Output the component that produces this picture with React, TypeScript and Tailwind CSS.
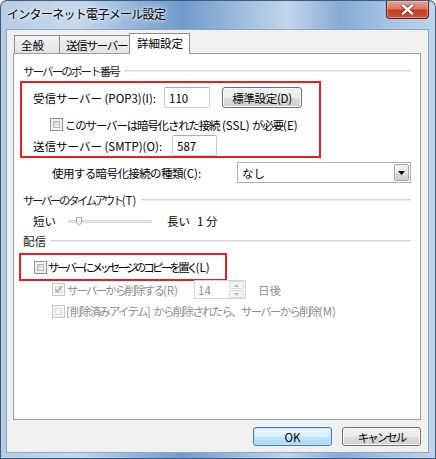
import React from "react";

const F = "font-['Noto_Sans_CJK_JP','Noto_Sans',sans-serif]";

function Check({ checked = false, disabled = false }: { checked?: boolean; disabled?: boolean }) {
  return (
    <span
      className={
        disabled
          ? "relative inline-block w-[13px] h-[13px] shrink-0 border border-[#c6c6c6] bg-[#f7f7f7]"
          : "relative inline-block w-[13px] h-[13px] shrink-0 border border-[#8e8f8f] bg-[#f4f4f4]"
      }
    >
      <span
        className={
          disabled
            ? "absolute left-[2px] top-[2px] w-[7px] h-[7px] border border-[#d8d8d8] bg-[#f2f2f2]"
            : "absolute left-[2px] top-[2px] w-[7px] h-[7px] border border-[#b3b7bd] bg-gradient-to-br from-[#cfd2d6] to-[#f7f7f7]"
        }
      />
      {checked && (
        <svg className="absolute left-[1px] top-[1px]" width="9" height="9" viewBox="0 0 9 9">
          <path d="M1.5 4.5 L3.5 6.8 L7.5 1.5" fill="none" stroke="#a6a6a6" strokeWidth="1.6" />
        </svg>
      )}
    </span>
  );
}

const T = "text-[11.5px] leading-[16px] whitespace-nowrap";

function Line() {
  return (
    <div className="flex-1 ml-[5px] flex flex-col">
      <div className="h-px bg-[#d5d5d5]" />
      <div className="h-px bg-[#ededed]" />
    </div>
  );
}

function TextBox({ value, w }: { value: string; w: string }) {
  return (
    <div
      className={`${w} h-[21px] border border-[#c9ccd2] border-t-[#abadb3] rounded-[2px] bg-white flex items-center pl-[4px] ${T} text-black`}
    >
      {value}
    </div>
  );
}

export default function App() {
  return (
    <div
      className={`${F} relative w-[436px] h-[459px] overflow-hidden rounded-t-[7px] shadow-[inset_0_0_0_1px_#3d5b7c] bg-[linear-gradient(90deg,#b7cde5_0%,#c6d8ec_18%,#8fb2d8_32%,#6f9bcb_42%,#a8c3e1_58%,#c3d6eb_66%,#86abd5_78%,#a9c5e3_90%,#c1d5ea_100%)]`}
    >
      {/* title bar */}
      <div className="flex items-start h-[30px]">
        <span className="ml-[7px] mt-[6px] text-[12px] leading-[16px] tracking-[-0.7px] text-black whitespace-nowrap [text-shadow:0_0_6px_#ffffff,0_0_3px_#ffffff]">
          インターネット電子メール設定
        </span>
        <div className="ml-auto mr-[7px] mt-[1px] w-[43px] h-[18px] rounded-b-[4px] border border-[#5e1f15] border-t-0 bg-[linear-gradient(180deg,#e7a595_0%,#d4755f_45%,#c13d23_55%,#cc5438_100%)] shadow-[inset_0_0_0_1px_rgba(255,220,210,0.45)] flex items-center justify-center">
          <svg width="13" height="11" viewBox="0 0 13 11">
            <path d="M2 1.5 L11 9.5 M11 1.5 L2 9.5" stroke="#4a1a10" strokeWidth="4" strokeLinecap="square" opacity="0.55" />
            <path d="M2 1.5 L11 9.5 M11 1.5 L2 9.5" stroke="#ffffff" strokeWidth="2.4" strokeLinecap="square" />
          </svg>
        </div>
      </div>

      {/* client area */}
      <div className="ml-[7px] w-[421px] h-[422px] bg-[#f0f0f0] shadow-[0_0_0_1px_#8aa6c4]">
        {/* tabs */}
        <div className="flex items-end h-[23px] pl-[7px]">
          <div className={`w-[46px] h-[18px] border border-b-0 border-[#898c95] bg-[linear-gradient(180deg,#f3f3f3,#e3e3e3)] pl-[6px] ${T} leading-[18px] text-black`}>
            全般
          </div>
          <div className={`-ml-px w-[71px] h-[18px] border border-b-0 border-[#898c95] bg-[linear-gradient(180deg,#f3f3f3,#e3e3e3)] pl-[6px] ${T} tracking-[-1.3px] leading-[18px] text-black`}>
            送信サーバー
          </div>
          <div className={`relative z-10 -ml-px -mb-px w-[61px] h-[21px] border border-b-0 border-[#898c95] bg-white pl-[7px] ${T} leading-[19px] text-black`}>
            詳細設定
          </div>
        </div>

        {/* panel */}
        <div className="ml-[6px] w-[408px] h-[367px] border border-[#9a9da3] bg-white px-[9px]">
          <div className="mt-[9px] flex items-center h-[16px]">
            <span className={`${T} tracking-[-1.9px] text-[#1a1a1a]`}>サーバーのポート番号</span>
            <Line />
          </div>

          {/* red box 1 */}
          <div className="mt-[2px] -ml-[3px] w-[301px] h-[77px] border-2 border-[#ea1c24]">
            <div className="mt-[4px] pl-[11px] flex items-center h-[21px]">
              <span className={`w-[131px] ${T} text-black`}>受信サーバー (POP3)(I):</span>
              <TextBox value="110" w="w-[46px]" />
              <div className={`ml-[12px] w-[80px] h-[21px] rounded-[3px] border border-[#707070] bg-[linear-gradient(180deg,#f2f2f2_0%,#ebebeb_50%,#dddddd_51%,#cfcfcf_100%)] shadow-[inset_0_0_0_1px_#fcfcfc] flex items-center justify-center ${T} tracking-[-0.3px] text-black`}>
                標準設定(D)
              </div>
            </div>
            <div className="mt-[10px] pl-[28px] flex items-center h-[13px]">
              <Check />
              <span className={`ml-[2px] ${T} text-black`}>
                <span className="tracking-[-1.2px]">このサーバーは暗号化された接続</span> (SSL) <span className="tracking-[-1.2px]">が必要</span>(E)
              </span>
            </div>
            <div className="mt-[4px] pl-[11px] flex items-center h-[21px]">
              <span className={`w-[139px] ${T} text-black`}>送信サーバー (SMTP)(O):</span>
              <TextBox value="587" w="w-[45px]" />
            </div>
          </div>

          {/* encryption select */}
          <div className="mt-[4px] flex items-center h-[21px]">
            <span className={`w-[214px] pl-[29px] ${T} text-black`}>
              <span className="tracking-[-0.6px]">使用する暗号化接続の種類</span>(C):
            </span>
            <div className="flex-1 h-[21px] border border-[#adb2b5] bg-white flex items-center pl-[4px] pr-[1px]">
              <span className={`flex-1 ${T} text-black`}>なし</span>
              <div className="w-[15px] h-[17px] border border-[#a7a7a7] rounded-[2px] bg-[linear-gradient(180deg,#f2f2f2_0%,#ebebeb_50%,#dddddd_51%,#cfcfcf_100%)] flex items-center justify-center">
                <svg width="7" height="4" viewBox="0 0 7 4">
                  <path d="M0 0 H7 L3.5 4 Z" fill="#000" />
                </svg>
              </div>
            </div>
          </div>

          <div className="mt-[9px] flex items-center h-[16px]">
            <span className={`${T} text-[#1a1a1a]`}>
              <span className="tracking-[-2.5px]">サーバーのタイムアウト</span>(T)
            </span>
            <Line />
          </div>

          {/* slider */}
          <div className="mt-[5px] pl-[10px] flex items-center h-[16px]">
            <span className={`w-[35px] ${T} text-black`}>短い</span>
            <div className="relative w-[84px] h-[9px]">
              <div className="absolute left-0 right-0 top-[3px] h-[3px] border border-[#d6d6d6] bg-[#ececec] rounded-[1px]" />
              <svg className="absolute left-[8px] top-0" width="6" height="9" viewBox="0 0 6 9">
                <path d="M0.5 0.5 H5.5 V6 L3 8.5 L0.5 6 Z" fill="#f4f4f4" stroke="#a9a9a9" />
              </svg>
            </div>
            <span className={`ml-[15px] ${T} text-black`}>長い</span>
            <span className={`ml-[7px] ${T} text-black`}>1 分</span>
          </div>

          <div className="mt-[4px] flex items-center h-[16px]">
            <span className={`${T} text-[#1a1a1a]`}>配信</span>
            <Line />
          </div>

          {/* red box 2 */}
          <div className="mt-[4px] -ml-[4px] w-[208px] h-[28px] border-2 border-[#ea1c24] pl-[13px] flex items-center">
            <Check />
            <span className={`ml-[1px] ${T} text-black`}>
              <span className="tracking-[-2.8px]">サーバーにメッセージのコピーを置く</span>(L)
            </span>
          </div>

          {/* delete from server */}
          <div className="-mt-px pl-[29px] flex items-center h-[19px]">
            <div className="w-[142px] flex items-center">
              <Check checked disabled />
              <span className={`ml-[2px] ${T} text-[#8d8d8d]`}>
                <span className="tracking-[-1.9px]">サーバーから削除する</span>(R)
              </span>
            </div>
            <div className="w-[52px] h-[19px] border border-[#d3d5da] bg-white flex items-center">
              <span className={`flex-1 pl-[3px] ${T} text-[#8d8d8d]`}>14</span>
              <div className="w-[15px] h-[17px] mr-px flex flex-col">
                <div className="h-[8px] border border-[#dadada] rounded-[1px] bg-[#f4f4f4] flex items-center justify-center">
                  <svg width="5" height="3" viewBox="0 0 5 3"><path d="M0 3 H5 L2.5 0 Z" fill="#b8b8b8" /></svg>
                </div>
                <div className="mt-px h-[8px] border border-[#dadada] rounded-[1px] bg-[#f4f4f4] flex items-center justify-center">
                  <svg width="5" height="3" viewBox="0 0 5 3"><path d="M0 0 H5 L2.5 3 Z" fill="#b8b8b8" /></svg>
                </div>
              </div>
            </div>
            <span className={`ml-[12px] ${T} text-[#8d8d8d]`}>日後</span>
          </div>

          <div className="mt-[5px] pl-[29px] flex items-center h-[14px]">
            <Check disabled />
            <span className={`ml-[1px] ${T} text-[#8d8d8d]`}>
              [<span className="tracking-[-1.75px]">削除済みアイテム</span>] <span className="tracking-[-1.75px]">から削除されたら、サーバーから削除</span>(M)
            </span>
          </div>
        </div>

        {/* buttons */}
        <div className="mt-[7px] pr-[7px] flex justify-end gap-[10px]">
          <div className={`w-[79px] h-[19px] rounded-[3px] border border-[#3c7fb1] bg-[linear-gradient(180deg,#eaf6fd_0%,#d9f0fc_50%,#bee6fd_51%,#a7d9f5_100%)] shadow-[inset_0_0_0_1px_#bfe6fb] flex items-center justify-center ${T} text-black`}>
            OK
          </div>
          <div className={`w-[79px] h-[19px] rounded-[3px] border border-[#707070] bg-[linear-gradient(180deg,#f2f2f2_0%,#ebebeb_50%,#dddddd_51%,#cfcfcf_100%)] shadow-[inset_0_0_0_1px_#fcfcfc] flex items-center justify-center ${T} tracking-[-2px] text-black`}>
            キャンセル
          </div>
        </div>
      </div>
    </div>
  );
}
